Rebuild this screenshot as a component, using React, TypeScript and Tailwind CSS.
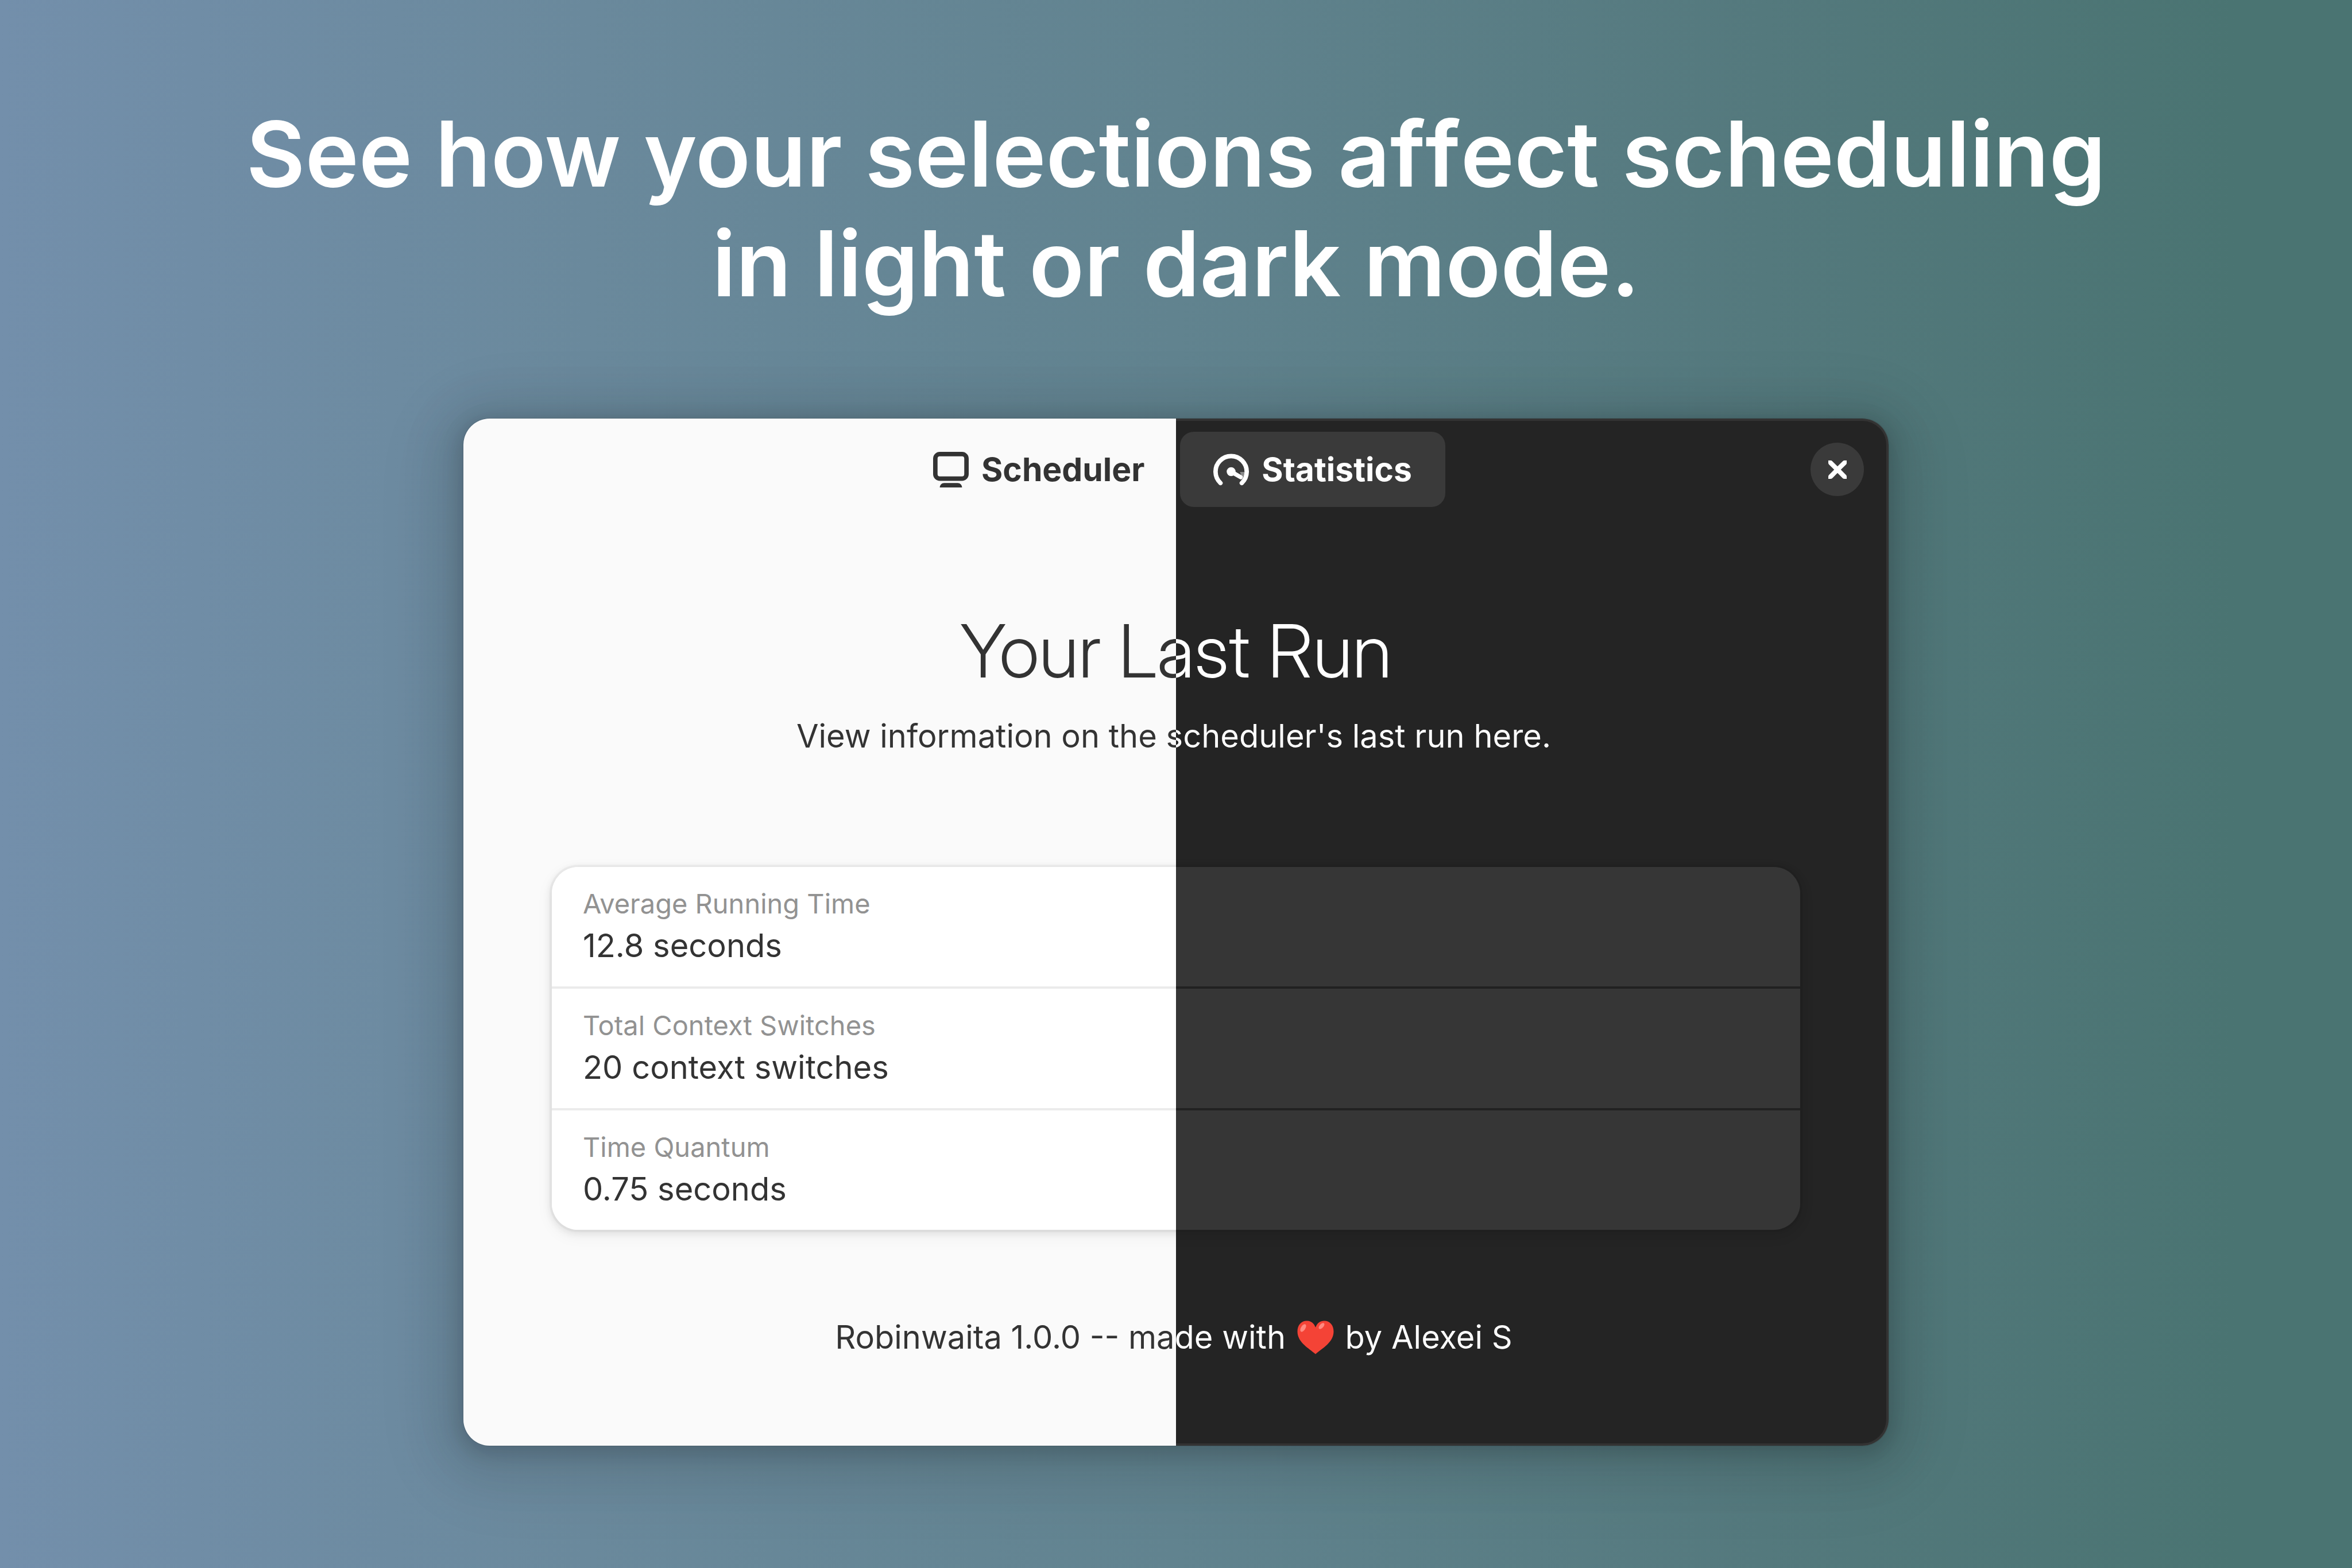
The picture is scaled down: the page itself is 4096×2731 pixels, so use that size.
import type { ReactNode } from "react";

const rows = [
  { label: "Average Running Time", value: "12.8 seconds" },
  { label: "Total Context Switches", value: "20 context switches" },
  { label: "Time Quantum", value: "0.75 seconds" },
];

/* Text whose ink flips from dark to light at the middle of the window. */
const splitInk =
  "bg-[linear-gradient(90deg,#333333_50%,#ffffff_50%)] bg-clip-text text-transparent";

function TabButton({
  icon,
  children,
  className,
  selected,
}: {
  icon: ReactNode;
  children: ReactNode;
  className: string;
  selected: boolean;
}) {
  return (
    <button
      type="button"
      role="tab"
      aria-selected={selected}
      className={`flex h-[131px] items-center gap-[22px] rounded-3xl px-[58px] text-[57px] leading-[70px] font-bold ${className}`}
    >
      {icon}
      {children}
    </button>
  );
}

function ScreenIcon() {
  return (
    <svg viewBox="0 0 16 16" className="size-[62px] shrink-0" aria-hidden="true">
      <rect x="1" y="1" width="14" height="11" rx="2" fill="none" stroke="currentColor" strokeWidth="2" />
      <path d="M5 14h6c1.1 0 2 .9 2 2H3c0-1.100.9-2 2-2z" fill="currentColor" />
    </svg>
  );
}

function GaugeIcon() {
  return (
    <svg viewBox="0 0 16 16" className="size-[62px] shrink-0" aria-hidden="true">
      <path d="M12 9h2v1.500l-1.100 1.300-.9-2.800z" fill="currentColor" opacity="0.4" />
      <path
        d="M3.200 14A7 7 0 1 1 12.800 14"
        fill="none"
        stroke="currentColor"
        strokeWidth="2"
        strokeLinecap="round"
      />
      <circle cx="8" cy="8.900" r="2" fill="currentColor" />
      <path d="M8 8.900l4.300 2.500" stroke="currentColor" strokeWidth="1.900" strokeLinecap="round" />
    </svg>
  );
}

function CloseIcon() {
  return (
    <svg viewBox="0 0 8 8" className="size-8" aria-hidden="true">
      <path
        d="M0 0h1c.26 0 .53.13.72.3L4 2.580 6.300.3C6.560.08 6.740 0 7 0h1v1c0 .29-.03.550-.25.750L5.450 4.030 7.720 6.300c.19.19.28.450.28.700v1H7c-.26 0-.53-.09-.72-.28L4 5.450 1.720 7.720C1.530 7.910 1.260 8 1 8H0V7c0-.26.09-.510.28-.700L2.560 4.030.28 1.750C.07 1.550-.02 1.290 0 1z"
        fill="currentColor"
      />
    </svg>
  );
}

function Heart() {
  return (
    <svg viewBox="0 0 64 59" className="mx-1 inline h-[59px] w-16 align-[-10px]" role="img" aria-label="love">
      <defs>
        <radialGradient id="heart-fill" cx="0.45" cy="0.4" r="0.68">
          <stop offset="0.8" stopColor="#f44336" />
          <stop offset="1" stopColor="#d8382f" />
        </radialGradient>
      </defs>
      <path
        d="M32 12C29 4 23.500.5 17 .5 7 .5.500 8 .5 19 .5 38 20 48 32 58.500 44 48 63.500 38 63.500 19 63.500 8 57 .5 47 .5 40.500.5 35 4 32 12z"
        fill="url(#heart-fill)"
      />
      <ellipse cx="10.500" cy="13" rx="3.800" ry="7.500" transform="rotate(32 10.500 13)" fill="#ff8a80" />
      <ellipse cx="42.500" cy="9.500" rx="3.300" ry="6.500" transform="rotate(42 42.500 9.500)" fill="#ff8a80" />
    </svg>
  );
}

export default function App() {
  return (
    <main className="flex min-h-screen flex-col items-center bg-[linear-gradient(90deg,#738fab_0%,#6a899c_25%,#61838f_50%,#54797d_75%,#4a7472_95%,#4a7472_100%)] pt-[172px] pb-[209px] font-['Inter',sans-serif]">
      <h1 className="text-center text-[158px] leading-[191px] font-semibold text-white">
        See how your selections a<span className="[font-kerning:none]">ff</span>ect scheduling
        <br />
        in light or dark mode.
      </h1>

      <section
        aria-label="Robinwaita"
        className="relative mt-[175px] flex w-[60.6%] flex-col rounded-[46px] bg-[linear-gradient(90deg,#fafafa_50%,#242424_50%)] pb-[154px] shadow-[0_0_0_1px_rgba(0,0,0,0.1),0_8px_31px_8px_rgba(0,0,0,0.13),0_12px_77px_39px_rgba(0,0,0,0.09),0_23px_124px_62px_rgba(0,0,0,0.04)] after:pointer-events-none after:absolute after:inset-0 after:rounded-[46px] after:border-4 after:border-white/7"
      >
        <header className="grid grid-cols-[1fr_auto_1fr] items-center pt-[23px] pb-[22px]">
          <span />
          <div role="tablist" className="flex gap-1 pr-3">
            <TabButton icon={<ScreenIcon />} selected={false} className="text-[#333333]">
              Scheduler
            </TabButton>
            <TabButton icon={<GaugeIcon />} selected className="bg-[#3a3a3a] text-white">
              Statistics
            </TabButton>
          </div>
          <button
            type="button"
            aria-label="Close"
            className="mr-[43px] flex size-[93px] items-center justify-center justify-self-end rounded-full bg-[#3a3a3a] text-white"
          >
            <CloseIcon />
          </button>
        </header>

        <h2
          className={`mt-[154px] text-center font-['Inter_Display',Inter,sans-serif] text-[128px] leading-[150px] font-light ${splitInk}`}
        >
          Your Last Run
        </h2>
        <p className={`mt-[38px] pr-2 text-center text-[56px] leading-[70px] ${splitInk}`}>
          View information on the scheduler's last run here.
        </p>

        <dl className="mx-[154px] mt-[193px] rounded-[46px] bg-[linear-gradient(90deg,#ffffff_50%,#363636_50%)] shadow-[0_0_0_4px_rgba(0,0,0,0.03),0_4px_12px_4px_rgba(0,0,0,0.07),0_8px_24px_8px_rgba(0,0,0,0.03)]">
          {rows.map((row, i) => (
            <div key={row.label}>
              {i > 0 && <div className="h-1 bg-[linear-gradient(90deg,#ebebeb_50%,#212121_50%)]" />}
              <div className="px-[54px] pt-[34px] pb-8">
                <dt className="text-[47px] leading-[60px] text-[#929292]">{row.label}</dt>
                <dd className="mt-1 text-[56px] leading-[78px] text-[#333333]">{row.value}</dd>
              </div>
            </div>
          ))}
        </dl>

        <p className={`mt-[152px] pr-2 text-center text-[56px] leading-[70px] ${splitInk}`}>
          Robinwaita 1.0.0 -- made with <Heart /> by Alexei S
        </p>
      </section>
    </main>
  );
}
